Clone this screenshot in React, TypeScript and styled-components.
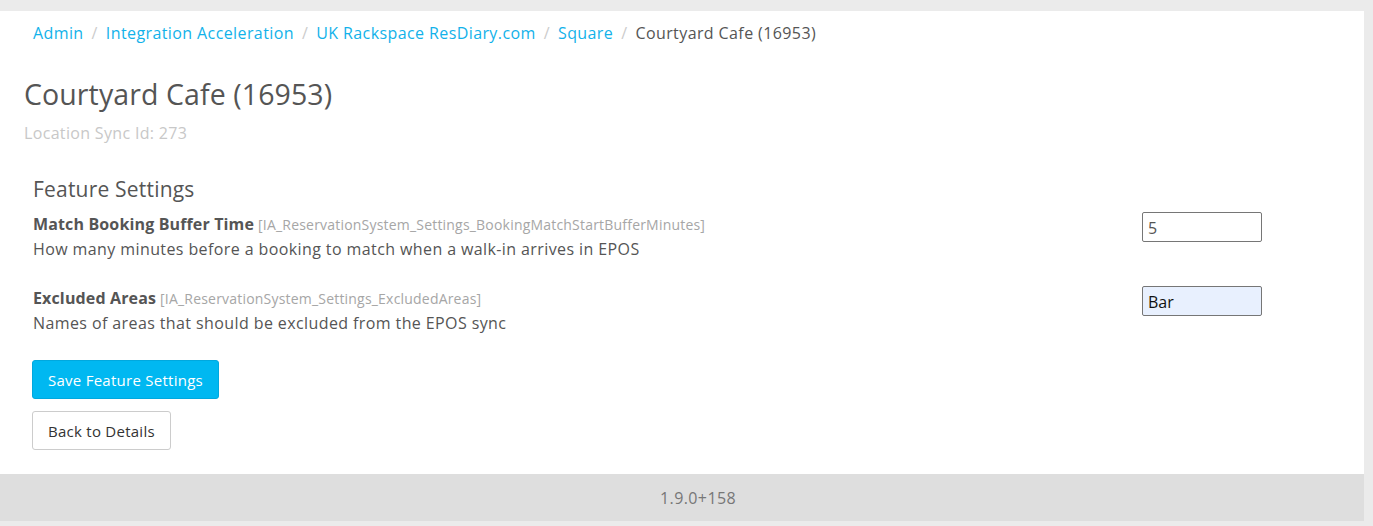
import React from "react";
import styled, { createGlobalStyle } from "styled-components";

const GlobalStyle = createGlobalStyle`
  html, body { margin: 0; padding: 0; }
  body {
    background: #ebebeb;
    font-family: "Open Sans", "Liberation Sans", sans-serif;
    color: #555;
  }
  * { box-sizing: border-box; }
`;

const Page = styled.div`
  padding: 11px 9px 0 0;
  min-height: 526px;
`;

const Panel = styled.main`
  background: #fff;
  padding: 11px 0 24px 24px;
`;

const Breadcrumb = styled.nav`
  display: flex;
  align-items: center;
  padding-left: 9px;
  font-size: 16px;
  line-height: 22px;
  letter-spacing: 0.4px;
`;

const Crumb = styled.a`
  color: #12b2ea;
  text-decoration: none;
`;

const Current = styled.span`
  color: #555;
`;

const Sep = styled.span`
  color: #ccc;
  padding: 0 8px 0 8px;
`;

const Title = styled.h1`
  margin: 34px 0 0;
  font-size: 28.5px;
  font-weight: 400;
  line-height: 33px;
  letter-spacing: 0.1px;
  color: #555;
`;

const SubTitle = styled.div`
  margin-top: 11px;
  font-size: 16px;
  line-height: 22px;
  letter-spacing: 0.33px;
  color: #c8c8c8;
`;

const Section = styled.section`
  padding-left: 9px;
  margin-top: 31px;
`;

const SectionTitle = styled.h2`
  margin: 0;
  font-size: 21px;
  font-weight: 400;
  line-height: 28px;
  letter-spacing: 0.2px;
  color: #555;
`;

const SettingRow = styled.div<{ $first?: boolean }>`
  display: flex;
  justify-content: space-between;
  align-items: flex-start;
  padding-right: 102px;
  margin-top: ${(p) => (p.$first ? "9px" : "24px")};
`;

const SettingText = styled.div`
  font-size: 16px;
  line-height: 25px;
  color: #555;
`;

const Label = styled.span`
  font-weight: 700;
  letter-spacing: 0.14px;
  color: #555;
`;

const Key = styled.span`
  font-size: 14px;
  letter-spacing: 0.2px;
  color: #a6a6a6;
  margin-left: 4px;
`;

const Description = styled.div`
  letter-spacing: 0.4px;
`;

const Input = styled.input<{ $autofill?: boolean }>`
  width: 120px;
  height: 30px;
  margin: 0;
  border: 1px solid #767676;
  border-radius: 2px;
  padding: 1px 5px 0;
  font-family: "Open Sans", "Liberation Sans", sans-serif;
  font-size: 16px;
  color: ${(p) => (p.$autofill ? "#111" : "#555")};
  background: ${(p) => (p.$autofill ? "#e8f0fe" : "#fff")};
  outline: none;
`;

const Buttons = styled.div`
  display: flex;
  flex-direction: column;
  align-items: flex-start;
  gap: 12px;
  margin: 24px 0 0 -1px;
`;

const Button = styled.button<{ $primary?: boolean }>`
  height: 39px;
  padding: 0 15px;
  border-radius: 3px;
  font-family: "Open Sans", "Liberation Sans", sans-serif;
  font-size: 15px;
  letter-spacing: 0.26px;
  cursor: pointer;
  border: 1px solid ${(p) => (p.$primary ? "#00a8de" : "#cccccc")};
  background: ${(p) => (p.$primary ? "#00b8f1" : "#fff")};
  color: ${(p) => (p.$primary ? "#fff" : "#333")};
`;

const Footer = styled.footer`
  background: #dedede;
  height: 47px;
  display: flex;
  align-items: center;
  padding-left: 660px;
  font-size: 16px;
  letter-spacing: 0.4px;
  color: #777;
`;

export default function App() {
  return (
    <>
      <GlobalStyle />
      <Page>
        <Panel>
          <Breadcrumb>
            <Crumb href="#">Admin</Crumb>
            <Sep>/</Sep>
            <Crumb href="#">Integration Acceleration</Crumb>
            <Sep>/</Sep>
            <Crumb href="#">UK Rackspace ResDiary.com</Crumb>
            <Sep>/</Sep>
            <Crumb href="#">Square</Crumb>
            <Sep>/</Sep>
            <Current>Courtyard Cafe (16953)</Current>
          </Breadcrumb>
          <Title>Courtyard Cafe (16953)</Title>
          <SubTitle>Location Sync Id: 273</SubTitle>
          <Section>
            <SectionTitle>Feature Settings</SectionTitle>
            <SettingRow $first>
              <SettingText>
                <Label>Match Booking Buffer Time</Label>
                <Key>[IA_ReservationSystem_Settings_BookingMatchStartBufferMinutes]</Key>
                <Description>How many minutes before a booking to match when a walk-in arrives in EPOS</Description>
              </SettingText>
              <Input defaultValue="5" />
            </SettingRow>
            <SettingRow>
              <SettingText>
                <Label>Excluded Areas</Label>
                <Key>[IA_ReservationSystem_Settings_ExcludedAreas]</Key>
                <Description>Names of areas that should be excluded from the EPOS sync</Description>
              </SettingText>
              <Input $autofill defaultValue="Bar" />
            </SettingRow>
            <Buttons>
              <Button $primary>Save Feature Settings</Button>
              <Button>Back to Details</Button>
            </Buttons>
          </Section>
        </Panel>
        <Footer>1.9.0+158</Footer>
      </Page>
    </>
  );
}
